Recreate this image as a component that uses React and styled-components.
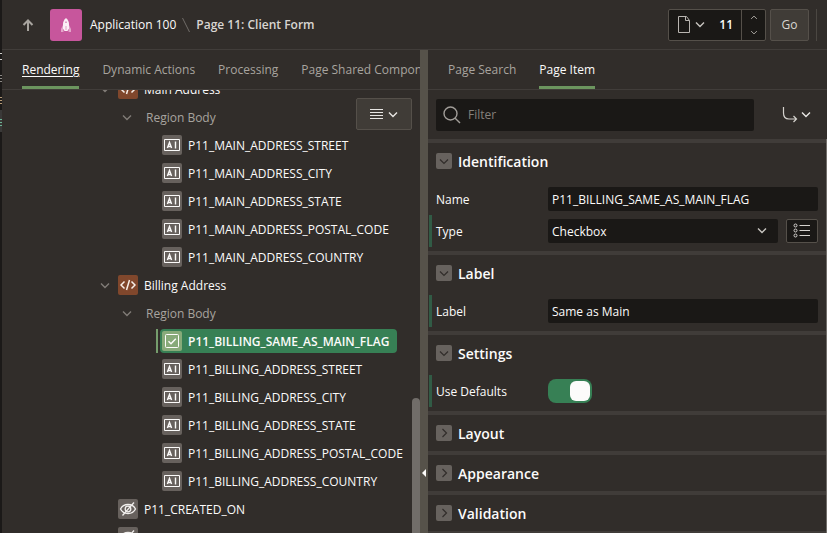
import React, { useState } from "react";
import styled, { createGlobalStyle, css } from "styled-components";

const c = {
  bg: "#312d2a",
  field: "#1a1816",
  raised: "#403c37",
  outline: "#55504a",
  line: "#413d3a",
  text: "#fcfbfa",
  muted: "#a8a49f",
  green: "#378055",
  leaf: "#6c955f",
};

const GlobalStyle = createGlobalStyle`
  *, *::before, *::after { box-sizing: border-box; }
  body { margin: 0; background: ${c.bg}; overflow: hidden; }
  body, button, input, select {
    font-family: "Open Sans", "Noto Sans", sans-serif;
    font-size: 12px;
    line-height: 17px;
    color: ${c.text};
  }
  button { padding: 0; border: 0; background: none; cursor: pointer; }
  svg { display: block; flex: none; }
`;

const Shell = styled.div`
  display: flex;
  height: 100vh;
`;
const Gutter = styled.div`
  flex: none;
  width: 2px;
  background: #1b1918;
  overflow: hidden;
`;
const Designer = styled.div`
  flex: 1;
  min-width: 0;
  display: flex;
  flex-direction: column;
`;

/* Header */
const Header = styled.header`
  flex: none;
  display: flex;
  align-items: center;
  height: 50px;
  padding: 0 10px 0 19px;
  border-bottom: 1px solid ${c.line};
`;
const UpButton = styled.button`
  margin-right: 15px;
`;
const AppBadge = styled.span`
  display: grid;
  place-items: center;
  width: 32px;
  height: 32px;
  margin-right: 8px;
  border-radius: 3px;
  background: #c7569c;
`;
const Crumbs = styled.nav`
  display: flex;
  align-items: center;
  gap: 6px;
  white-space: nowrap;
`;
const CrumbLink = styled.a`
  color: ${c.text};
  text-decoration: none;
`;
const CrumbCurrent = styled.span`
  font-weight: 600;
  color: #d9d6d2;
`;
const Picker = styled.div`
  display: flex;
  height: 32px;
  margin-left: auto;
  border: 1px solid ${c.outline};
  border-radius: 2px;
  background: ${c.field};
`;
const PickerMenu = styled.button`
  display: flex;
  align-items: center;
  gap: 4px;
  padding: 0 8px;
`;
const PageNumber = styled.input`
  width: 28px;
  padding: 0 8px 0 0;
  border: 0;
  background: none;
  font-weight: 600;
  text-align: right;
  outline: none;
`;
const Stepper = styled.div`
  display: grid;
  grid-template-rows: 1fr 1fr;
  width: 24px;
  border-left: 1px solid ${c.outline};
`;
const StepButton = styled.button`
  display: grid;
  place-items: center;
`;
const GoButton = styled.button`
  width: 39px;
  height: 32px;
  margin: 0 7px 0 4px;
  border: 1px solid ${c.outline};
  border-radius: 2px;
  background: ${c.raised};
  color: #d9d6d2;
`;
const HeaderRule = styled.span`
  width: 1px;
  height: 32px;
  background: #4b4742;
`;

/* Panes */
const Panes = styled.div`
  flex: 1;
  min-height: 0;
  display: grid;
  grid-template-columns: minmax(0, 418fr) 8px minmax(0, 399fr);
`;
const Pane = styled.section`
  position: relative;
  display: flex;
  flex-direction: column;
  min-width: 0;
  min-height: 0;
`;
const TabList = styled.div`
  flex: none;
  display: flex;
  gap: 23px;
  height: 40px;
  padding: 0 20px;
  overflow: hidden;
  border-bottom: 1px solid ${c.line};
`;
const Tab = styled.button`
  flex: none;
  padding-top: 3px;
  border-bottom: 3px solid transparent;
  white-space: nowrap;
  color: ${c.muted};
  ${(p) =>
    p["aria-selected"] &&
    css`
      color: ${c.text};
      border-color: ${c.leaf};
    `}
  ${(p) => p.$focused && "text-decoration: underline; text-underline-offset: 2px;"}
`;
const Splitter = styled.button`
  position: relative;
  background: #56524a;
`;
const SplitterArrow = styled.svg`
  position: absolute;
  left: 1px;
  bottom: 56px;
`;

/* Tree */
const TreeViewport = styled.div`
  flex: 1;
  min-height: 0;
  overflow: hidden;
`;
const Tree = styled.ul`
  margin: -15px 0 0;
  padding: 0;
  list-style: none;
`;
const indents = { region: "94px", body: "116px", item: "158px", page: "114px" };
const TreeRow = styled.li`
  display: flex;
  align-items: center;
  gap: 4px;
  height: 28px;
  padding-left: ${(p) => indents[p.$level]};
`;
const Expander = styled.button`
  display: grid;
  place-items: center;
  width: 18px;
  height: 20px;
`;
const NodeMark = styled.span`
  display: grid;
  place-items: center;
  width: 20px;
  height: 20px;
  border-radius: 2px;
  background: ${(p) => p.$fill || "#67615d"};
`;
const NodeButton = styled.button`
  position: relative;
  display: flex;
  align-items: center;
  gap: 6px;
  height: 24px;
  padding: 0 8px 0 ${(p) => (p.$flush ? "0" : "2px")};
  border-radius: 4px;
  white-space: nowrap;
  ${(p) =>
    p.$selected &&
    css`
      background: ${c.green};
      font-weight: 600;
      &::before {
        content: "";
        position: absolute;
        left: -4px;
        top: 0;
        width: 2px;
        height: 24px;
        background: #759c6c;
      }
    `}
`;
const BodyLabel = styled.span`
  margin-left: 6px;
  color: ${c.muted};
`;
const TreeMenu = styled.button`
  position: absolute;
  top: 48px;
  right: 8px;
  display: flex;
  align-items: center;
  justify-content: center;
  gap: 4px;
  width: 56px;
  height: 32px;
  border: 1px solid ${c.outline};
  border-radius: 2px;
  background: ${c.raised};
`;
const ScrollThumb = styled.span`
  position: absolute;
  right: 0;
  bottom: -8px;
  width: 8px;
  height: 143px;
  border-radius: 4px;
  background: #716d69;
`;

/* Property editor */
const FilterBar = styled.div`
  flex: none;
  display: flex;
  align-items: center;
  height: 49px;
  padding: 0 16px 0 8px;
`;
const FilterBox = styled.label`
  flex: 1;
  display: flex;
  align-items: center;
  gap: 7px;
  height: 32px;
  margin-right: 28px;
  padding: 0 7px;
  border-radius: 2px;
  background: ${c.field};
`;
const FilterInput = styled.input`
  flex: 1;
  min-width: 0;
  padding: 0;
  border: 0;
  outline: none;
  background: none;
  &::placeholder { color: #85807b; opacity: 1; }
`;
const GotoButton = styled.button`
  display: flex;
  align-items: center;
  gap: 3px;
`;
const Groups = styled.div`
  flex: 1;
  min-height: 0;
  overflow: hidden;
  border-right: 1px solid #716d69;
`;
const Group = styled.section`
  border-top: 4px solid #403c39;
  &:last-child { border-bottom: 4px solid #403c39; }
`;
const GroupHeading = styled.h2`
  margin: 0;
`;
const GroupToggle = styled.button`
  display: flex;
  align-items: center;
  gap: 6px;
  width: 100%;
  height: 36px;
  padding-left: 8px;
  font-size: 14px;
  font-weight: 600;
`;
const ToggleMark = styled.span`
  display: grid;
  place-items: center;
  width: 16px;
  height: 16px;
  border-radius: 2px;
  background: #67625e;
`;
const GroupBody = styled.div`
  padding: 4px 0;
`;
const Property = styled.div`
  display: flex;
  align-items: center;
  height: 32px;
  margin-left: 1px;
  padding: 0 8px 0 4px;
  border-left: 3px solid ${(p) => (p.$changed ? "#315b45" : "transparent")};
`;
const PropertyLabel = styled.label`
  flex: none;
  width: 112px;
`;
const field = css`
  flex: 1;
  min-width: 0;
  width: 100%;
  height: 24px;
  padding: 0 4px;
  border: 0;
  border-radius: 2px;
  outline: none;
  background: ${c.field};
`;
const TextField = styled.input`${field}`;
const SelectWrap = styled.div`
  position: relative;
  flex: 1;
  display: flex;
  min-width: 0;
`;
const SelectField = styled.select`
  ${field}
  appearance: none;
`;
const SelectArrow = styled.span`
  position: absolute;
  top: 8px;
  right: 11px;
  pointer-events: none;
`;
const ListButton = styled.button`
  display: grid;
  place-items: center;
  width: 32px;
  height: 24px;
  margin-left: 8px;
  border: 1px solid ${c.outline};
  border-radius: 2px;
  background: ${c.field};
`;
const Switch = styled.input`
  appearance: none;
  width: 44px;
  height: 24px;
  margin: 0;
  padding: 2px;
  border-radius: 8px;
  background: ${c.outline};
  cursor: pointer;
  &::before {
    content: "";
    display: block;
    width: 20px;
    height: 20px;
    border-radius: 6px;
    background: ${c.text};
  }
  &:checked { background: ${c.green}; }
  &:checked::before { margin-left: auto; }
`;

/* Icons */
const paths = { down: "M1 1.5 5 5.5 9 1.5", up: "M1 5.5 5 1.5 9 5.5" };
function Chevron({ dir = "down", color = "#c8c5c1", width = 10, stroke = 1.4 }) {
  return (
    <svg width={width} height={width - 3} viewBox="0 0 10 7" fill="none" stroke={color} strokeWidth={stroke} aria-hidden="true">
      <path d={paths[dir]} />
    </svg>
  );
}
const ChevronRight = () => (
  <svg width="7" height="10" viewBox="0 0 7 10" fill="none" stroke={c.bg} strokeWidth="1.2" aria-hidden="true">
    <path d="M1.5 1 5.5 5 1.5 9" />
  </svg>
);
const ArrowUp = () => (
  <svg width="14" height="14" viewBox="0 0 14 14" fill="none" stroke="#a8a49f" strokeWidth="2" aria-hidden="true">
    <path d="M7 13V3M2.500 7 7 2.500 11.500 7" />
  </svg>
);
const Rocket = () => (
  <svg width="12" height="14" viewBox="0 0 12 14" aria-hidden="true">
    <path d="M3 7 1 11v3h2.500M9 7l2 4v3H8.500" fill="#e3a3c9" />
    <path d="M6 0C4.200 1.500 3 3.500 3 6v4.500L4.500 13h3L9 10.500V6C9 3.500 7.800 1.500 6 0Z" fill="#fbf0f6" />
    <path d="M5 3.500h2V5H5zM5.500 8h1v4h-1z" fill="#dfa0c6" />
  </svg>
);
const CrumbSlash = () => (
  <svg width="8" height="16" viewBox="0 0 8 16" stroke="#716d69" aria-hidden="true">
    <path d="M.5 1 7.500 15" />
  </svg>
);
const PageIcon = () => (
  <svg width="14" height="17" viewBox="0 0 14 17" fill="none" stroke="#b9b5b1" aria-hidden="true">
    <path d="M1.500.5h8L12.500 4.500v12h-11zM8.500.5v4h4" />
  </svg>
);
const CodeIcon = () => (
  <svg width="16" height="12" viewBox="0 0 16 12" fill="none" stroke="#f7efe9" strokeWidth="1.5" aria-hidden="true">
    <path d="M4.500 2.500 1 6l3.500 3.500M11.500 2.500 15 6l-3.500 3.500M9.500 1 6.500 11" />
  </svg>
);
const TextItemIcon = () => (
  <svg width="16" height="12" viewBox="0 0 16 12" fill="none" stroke="#fcfbfa" aria-hidden="true">
    <path d="M.5.5h15v11H.5z" />
    <path d="M3.400 9 5.500 3.500 7.600 9M4.200 7.500h2.600" strokeWidth="1.4" />
    <path d="M11.500 2.500v7" strokeWidth="1.4" />
  </svg>
);
const CheckIcon = () => (
  <svg width="14" height="14" viewBox="0 0 14 14" fill="none" stroke="#fcfbfa" aria-hidden="true">
    <rect x=".5" y=".5" width="13" height="13" rx="1" />
    <path d="M3.500 7.200 6 9.700l4.800-5" strokeWidth="1.4" />
  </svg>
);
const HiddenIcon = () => (
  <svg width="18" height="16" viewBox="0 0 18 16" fill="none" stroke="#f1efed" strokeWidth="1.3" aria-hidden="true">
    <path d="M1.500 8C3 5 6 3.500 9 3.500S15 5 16.500 8C15 11 12 12.500 9 12.500S3 11 1.500 8Z" />
    <circle cx="9" cy="8" r="2.800" />
    <path d="M15 1.500 3.500 14.500" />
  </svg>
);
const LinesIcon = () => (
  <svg width="14" height="12" viewBox="0 0 14 12" stroke="#e8e6e3" aria-hidden="true">
    <path d="M0 1.500h13M0 4.500h13M0 7.500h13M0 10.500h13" />
  </svg>
);
const SearchIcon = () => (
  <svg width="18" height="18" viewBox="0 0 18 18" fill="none" stroke="#a19d98" strokeWidth="1.4" aria-hidden="true">
    <circle cx="7.500" cy="7.500" r="6.500" />
    <path d="m12.200 12.200 4.800 4.800" />
  </svg>
);
const GotoIcon = () => (
  <svg width="16" height="16" viewBox="0 0 16 16" fill="none" stroke="#d5d2ce" strokeWidth="1.2" aria-hidden="true">
    <path d="M1.500 0v6c0 4 2 6 5.500 6h7M11.500 9l3 3-3 3" />
  </svg>
);
const ListIcon = () => (
  <svg width="18" height="16" viewBox="0 0 18 16" fill="none" stroke="#d5d2ce" aria-hidden="true">
    <circle cx="2.500" cy="2.500" r="1.500" />
    <circle cx="2.500" cy="7.500" r="1.500" />
    <circle cx="2.500" cy="12.500" r="1.500" />
    <path d="M6.500 2.500H17M6.500 7.500H17M6.500 12.500H17" />
  </svg>
);
const GutterMarks = () => (
  <svg width="2" height="140" viewBox="0 0 2 140" aria-hidden="true">
    <path d="M0 110h2v22H0z" fill="#3a3938" />
    <path d="M0 53h2v1H0zM0 59h2v1H0z" fill="#d0cecb" />
    <path d="M0 75h2v1H0zM0 78h2v1H0zM0 81h2v1H0z" fill="#8d8a86" />
    <path d="M0 97h2v1H0zM0 100h2v1H0zM0 103h2v1H0z" fill="#b69a76" />
    <path d="M0 119h2v1H0zM0 122h2v1H0zM0 125h2v1H0z" fill="#6db394" />
  </svg>
);

const item = (name) => ({ kind: "item", name });
const tree = [
  { kind: "region", name: "Main Address" },
  { kind: "body", name: "Region Body" },
  item("P11_MAIN_ADDRESS_STREET"),
  item("P11_MAIN_ADDRESS_CITY"),
  item("P11_MAIN_ADDRESS_STATE"),
  item("P11_MAIN_ADDRESS_POSTAL_CODE"),
  item("P11_MAIN_ADDRESS_COUNTRY"),
  { kind: "region", name: "Billing Address" },
  { kind: "body", name: "Region Body" },
  { kind: "item", name: "P11_BILLING_SAME_AS_MAIN_FLAG", selected: true },
  item("P11_BILLING_ADDRESS_STREET"),
  item("P11_BILLING_ADDRESS_CITY"),
  item("P11_BILLING_ADDRESS_STATE"),
  item("P11_BILLING_ADDRESS_POSTAL_CODE"),
  item("P11_BILLING_ADDRESS_COUNTRY"),
  { kind: "page", name: "P11_CREATED_ON" },
  { kind: "page", name: "" },
];

function TreeNode({ kind, name, selected }) {
  if (kind === "body") {
    return (
      <TreeRow $level="body">
        <Expander aria-label="Collapse Region Body"><Chevron color="#817c77" /></Expander>
        <BodyLabel>{name}</BodyLabel>
      </TreeRow>
    );
  }
  if (kind === "region") {
    return (
      <TreeRow $level="region">
        <Expander aria-label={"Collapse " + name}><Chevron color="#817c77" /></Expander>
        <NodeButton $flush>
          <NodeMark $fill="#80472c"><CodeIcon /></NodeMark>
          {name}
        </NodeButton>
      </TreeRow>
    );
  }
  return (
    <TreeRow $level={kind}>
      <NodeButton $selected={selected} aria-label={name || "Hidden item"}>
        <NodeMark $fill={selected ? "#87aa79" : undefined}>
          {selected ? <CheckIcon /> : kind === "page" ? <HiddenIcon /> : <TextItemIcon />}
        </NodeMark>
        {name}
      </NodeButton>
    </TreeRow>
  );
}

function PropertyGroup({ title, initiallyOpen, children }) {
  const [open, setOpen] = useState(Boolean(initiallyOpen));
  return (
    <Group>
      <GroupHeading>
        <GroupToggle aria-expanded={open} onClick={() => setOpen(!open)}>
          <ToggleMark>{open ? <Chevron color={c.bg} stroke={1.2} /> : <ChevronRight />}</ToggleMark>
          {title}
        </GroupToggle>
      </GroupHeading>
      {open && children && <GroupBody>{children}</GroupBody>}
    </Group>
  );
}

export default function App() {
  return (
    <>
      <GlobalStyle />
      <Shell>
        <Gutter><GutterMarks /></Gutter>
        <Designer>
          <Header>
            <UpButton aria-label="Up"><ArrowUp /></UpButton>
            <AppBadge><Rocket /></AppBadge>
            <Crumbs>
              <CrumbLink href="#application">Application 100</CrumbLink>
              <CrumbSlash />
              <CrumbCurrent>Page 11: Client Form</CrumbCurrent>
            </Crumbs>
            <Picker>
              <PickerMenu aria-label="Choose page"><PageIcon /><Chevron /></PickerMenu>
              <PageNumber aria-label="Page number" defaultValue="11" />
              <Stepper>
                <StepButton aria-label="Next page"><Chevron dir="up" width={8} color="#a8a49f" /></StepButton>
                <StepButton aria-label="Previous page"><Chevron width={8} color="#a8a49f" /></StepButton>
              </Stepper>
            </Picker>
            <GoButton>Go</GoButton>
            <HeaderRule />
          </Header>
          <Panes>
            <Pane>
              <TabList role="tablist">
                <Tab role="tab" aria-selected $focused>Rendering</Tab>
                <Tab role="tab">Dynamic Actions</Tab>
                <Tab role="tab">Processing</Tab>
                <Tab role="tab">Page Shared Components</Tab>
              </TabList>
              <TreeViewport>
                <Tree>
                  {tree.map((node, i) => <TreeNode key={i} {...node} />)}
                </Tree>
              </TreeViewport>
              <TreeMenu aria-label="Menu"><LinesIcon /><Chevron color="#e8e6e3" /></TreeMenu>
              <ScrollThumb />
            </Pane>
            <Splitter aria-label="Collapse pane">
              <SplitterArrow width="6" height="8" viewBox="0 0 6 8" aria-hidden="true">
                <path d="M5 0v8L1 4z" fill="#fcfbfa" />
              </SplitterArrow>
            </Splitter>
            <Pane>
              <TabList role="tablist">
                <Tab role="tab">Page Search</Tab>
                <Tab role="tab" aria-selected>Page Item</Tab>
              </TabList>
              <FilterBar>
                <FilterBox>
                  <SearchIcon />
                  <FilterInput aria-label="Filter" placeholder="Filter" />
                </FilterBox>
                <GotoButton aria-label="Go to group"><GotoIcon /><Chevron color="#e8e6e3" /></GotoButton>
              </FilterBar>
              <Groups>
                <PropertyGroup title="Identification" initiallyOpen>
                  <Property>
                    <PropertyLabel htmlFor="name">Name</PropertyLabel>
                    <TextField id="name" defaultValue="P11_BILLING_SAME_AS_MAIN_FLAG" />
                  </Property>
                  <Property $changed>
                    <PropertyLabel htmlFor="type">Type</PropertyLabel>
                    <SelectWrap>
                      <SelectField id="type"><option>Checkbox</option></SelectField>
                      <SelectArrow><Chevron /></SelectArrow>
                    </SelectWrap>
                    <ListButton aria-label="Quick picks"><ListIcon /></ListButton>
                  </Property>
                </PropertyGroup>
                <PropertyGroup title="Label" initiallyOpen>
                  <Property $changed>
                    <PropertyLabel htmlFor="label">Label</PropertyLabel>
                    <TextField id="label" defaultValue="Same as Main" />
                  </Property>
                </PropertyGroup>
                <PropertyGroup title="Settings" initiallyOpen>
                  <Property $changed>
                    <PropertyLabel htmlFor="defaults">Use Defaults</PropertyLabel>
                    <Switch id="defaults" type="checkbox" defaultChecked />
                  </Property>
                </PropertyGroup>
                <PropertyGroup title="Layout" />
                <PropertyGroup title="Appearance" />
                <PropertyGroup title="Validation" />
              </Groups>
            </Pane>
          </Panes>
        </Designer>
      </Shell>
    </>
  );
}
